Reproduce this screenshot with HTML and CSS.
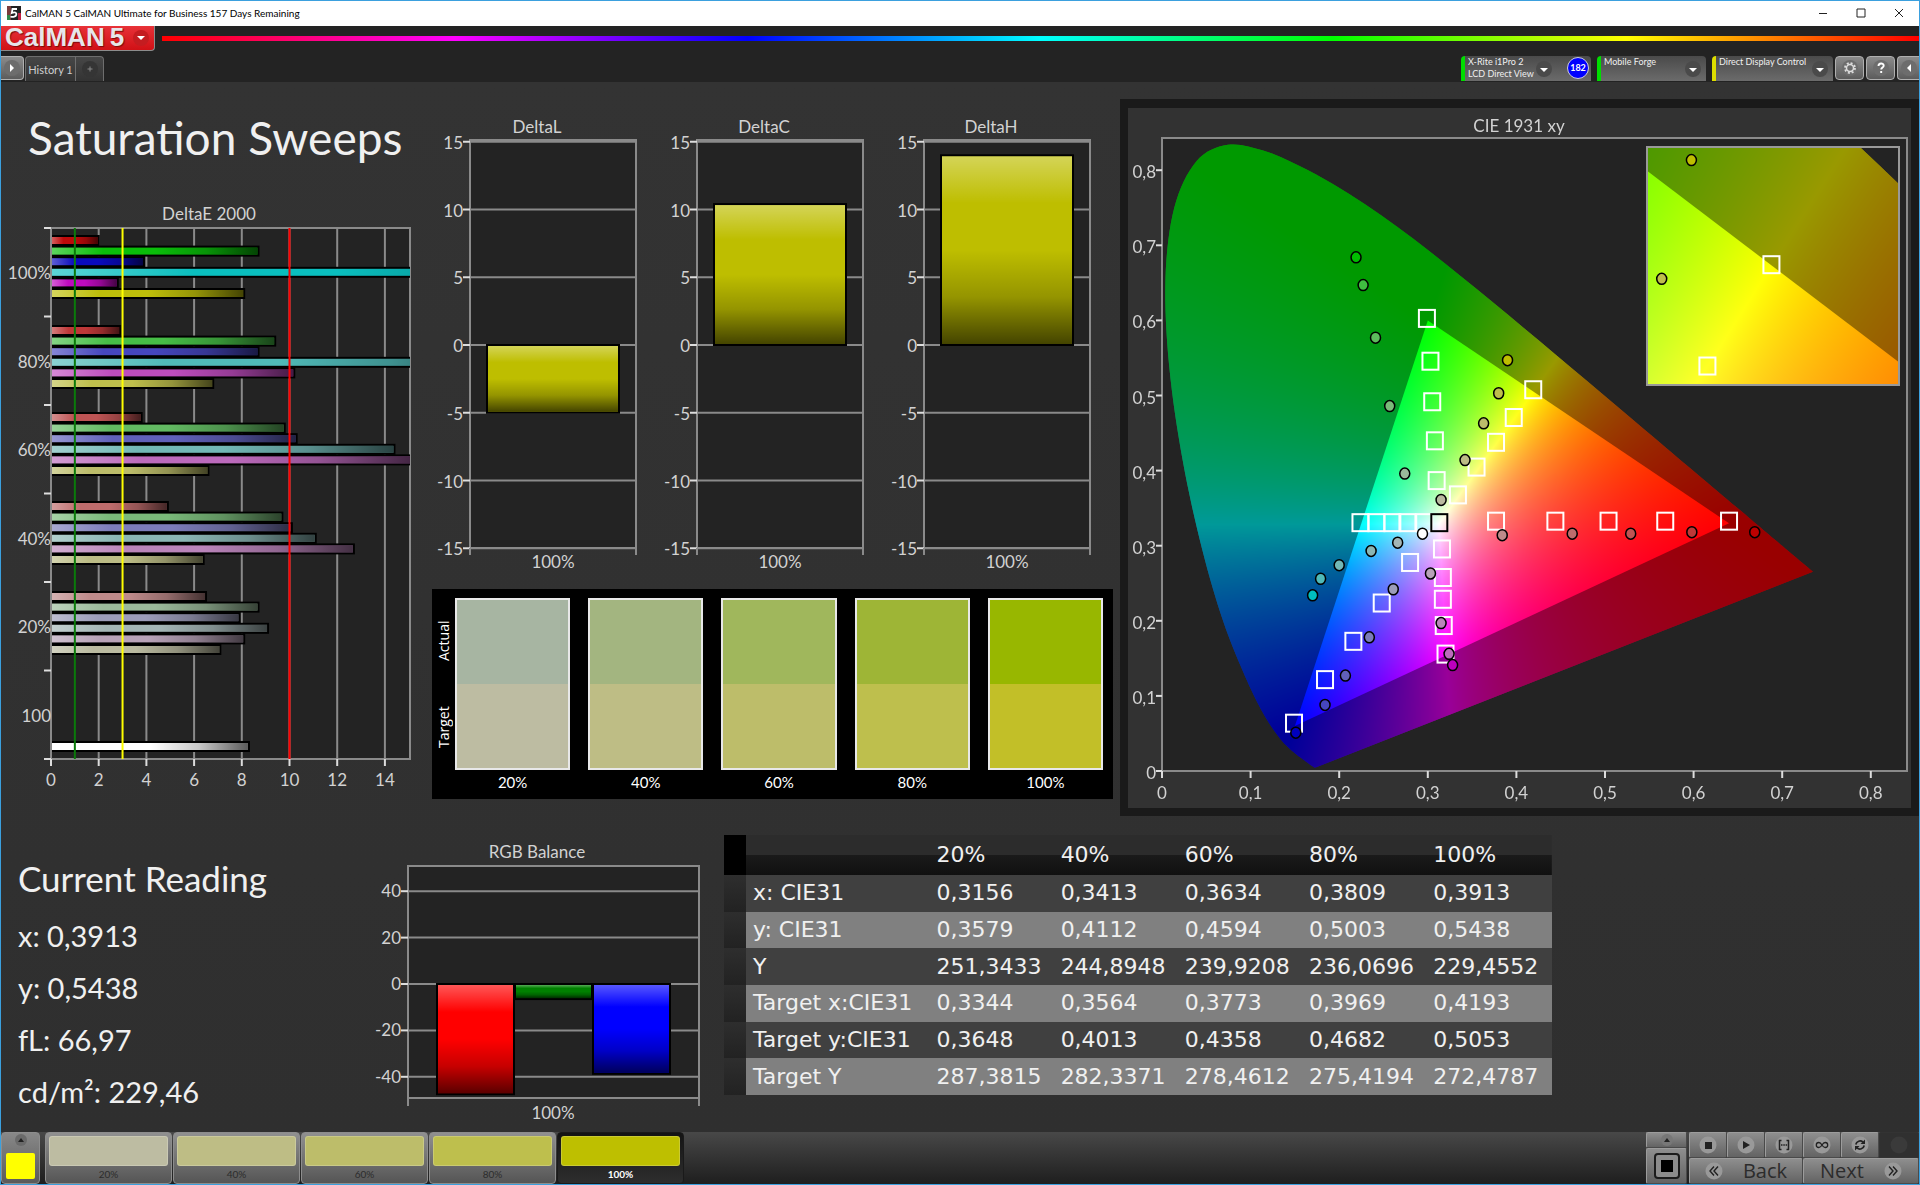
FILE: index.html
```html
<!DOCTYPE html>
<html lang="en">
<head>
    <meta charset="UTF-8">
    <meta name="viewport" content="width=device-width, initial-scale=1.0">
    <title>CalMAN 5</title>
    <link rel="stylesheet" href="styles.css">
</head>
<body>
    <svg class="defs" aria-hidden="true">
        <defs>
            <linearGradient id="glossV" x1="0" y1="0" x2="0" y2="1">
                <stop offset="0" stop-color="#fff" stop-opacity=".34"/>
                <stop offset=".25" stop-color="#fff" stop-opacity="0"/>
                <stop offset=".5" stop-color="#000" stop-opacity="0"/>
                <stop offset=".75" stop-color="#000" stop-opacity=".22"/>
                <stop offset="1" stop-color="#000" stop-opacity=".64"/>
            </linearGradient>
            <linearGradient id="glossH" x1="0" y1="0" x2="1" y2="0">
                <stop offset="0" stop-color="#fff" stop-opacity=".34"/>
                <stop offset=".25" stop-color="#fff" stop-opacity="0"/>
                <stop offset=".5" stop-color="#000" stop-opacity="0"/>
                <stop offset=".75" stop-color="#000" stop-opacity=".22"/>
                <stop offset="1" stop-color="#000" stop-opacity=".64"/>
            </linearGradient>
        </defs>
    </svg>

    <div class="window">
        <header class="titlebar">
            <svg class="app-icon" viewBox="0 0 14 14">
                <rect width="14" height="14" fill="#222"/>
                <path d="M0 0h4v14h-4z" fill="#7a3b3b"/>
                <path d="M0 9h3v5h-3z" fill="#2f8a4a"/>
                <path d="M11 7h3v7h-3z" fill="#c02040"/>
                <path d="M10 3H5.500l-.7 4c3-1.500 5-.3 4.500 1.700S6 11.500 3.500 10.500" fill="none" stroke="#fff" stroke-width="1.800"/>
            </svg>
            <span class="titlebar-text">CalMAN 5 CalMAN Ultimate for Business 157 Days Remaining</span>
            <div class="window-buttons">
                <button type="button" aria-label="Minimize"><svg viewBox="0 0 10 10"><path d="M1 5.500h8"/></svg></button>
                <button type="button" aria-label="Maximize"><svg viewBox="0 0 10 10"><path d="M1 1h8v8h-8z"/></svg></button>
                <button type="button" aria-label="Close"><svg viewBox="0 0 10 10"><path d="M1 1l8 8M9 1l-8 8"/></svg></button>
            </div>
        </header>

        <div class="brandbar">
            <button type="button" class="logo">
                <span>CalMAN</span><span>5</span>
                <svg class="knob" viewBox="0 0 18 18"><circle cx="9" cy="9" r="8" fill="#c41c20"/><path d="M5 7h8l-4 4z" fill="#fff"/></svg>
            </button>
            <div class="rainbow"></div>
        </div>

        <nav class="toolbar">
            <button type="button" class="tool tool-first" aria-label="Expand">
                <svg viewBox="0 0 18 18"><circle cx="9" cy="9" r="8" fill="#6d6d6d"/><path d="M7 5v8l4-4z" fill="#fff"/></svg>
            </button>
            <div class="tabs">
                <button type="button" class="tab">History 1</button>
                <button type="button" class="tab tab-add" aria-label="Add tab">
                    <svg viewBox="0 0 18 18"><circle cx="9" cy="9" r="8" fill="#353535"/><path d="M6.500 9h5M9 6.500v5" stroke="#8a8a8a"/></svg>
                </button>
            </div>
            <div class="devices">
                <button type="button" class="device green meter">
                    <span>X-Rite i1Pro 2<br>LCD Direct View</span>
                    <svg class="knob" viewBox="0 0 18 18"><circle cx="9" cy="9" r="8" fill="#4a4a4a"/><path d="M5 8h8l-4 4z" fill="#fff"/></svg>
                    <b class="badge">182</b>
                </button>
                <button type="button" class="device green source">
                    <span>Mobile Forge</span>
                    <svg class="knob" viewBox="0 0 18 18"><circle cx="9" cy="9" r="8" fill="#4a4a4a"/><path d="M5 8h8l-4 4z" fill="#fff"/></svg>
                </button>
                <button type="button" class="device yellow display">
                    <span>Direct Display Control</span>
                    <svg class="knob" viewBox="0 0 18 18"><circle cx="9" cy="9" r="8" fill="#4a4a4a"/><path d="M5 8h8l-4 4z" fill="#fff"/></svg>
                </button>
                <button type="button" class="tool" aria-label="Settings">
                    <svg viewBox="0 0 18 18"><circle cx="9" cy="9" r="8" fill="#6d6d6d"/><circle cx="9" cy="9" r="3.500" fill="none" stroke="#ddd" stroke-width="1.500"/><circle cx="9" cy="9" r="5" fill="none" stroke="#ddd" stroke-width="1.800" stroke-dasharray="2 1.930"/></svg>
                </button>
                <button type="button" class="tool" aria-label="Help">
                    <svg viewBox="0 0 18 18"><circle cx="9" cy="9" r="8" fill="#6d6d6d"/><path d="M6.500 7c0-3.300 5.200-3.300 5.200-.3 0 1.800-2.500 1.800-2.500 3.800M9.200 12v2" fill="none" stroke="#fff" stroke-width="1.900"/></svg>
                </button>
                <button type="button" class="tool tool-last" aria-label="Collapse">
                    <svg viewBox="0 0 18 18"><circle cx="9" cy="9" r="8" fill="#6d6d6d"/><path d="M11 5v8l-4-4z" fill="#fff"/></svg>
                </button>
            </div>
        </nav>

        <main>
            <section class="charts">
                <div class="sweeps">
                    <h1>Saturation Sweeps</h1>
                    <svg class="chart" id="deltaE" viewBox="0 0 430 600"></svg>
                </div>

                <div class="deltas">
                    <div class="delta-row">
                        <svg class="chart" id="deltaL" viewBox="0 0 227 470"></svg>
                        <svg class="chart" id="deltaC" viewBox="0 0 227 470"></svg>
                        <svg class="chart" id="deltaH" viewBox="0 0 227 470"></svg>
                    </div>
                    <div class="swatches">
                        <div class="swatch-side"><span>Actual</span><span>Target</span></div>
                        <div class="swatch s20"><div><i></i><i></i></div><span>20%</span></div>
                        <div class="swatch s40"><div><i></i><i></i></div><span>40%</span></div>
                        <div class="swatch s60"><div><i></i><i></i></div><span>60%</span></div>
                        <div class="swatch s80"><div><i></i><i></i></div><span>80%</span></div>
                        <div class="swatch s100"><div><i></i><i></i></div><span>100%</span></div>
                    </div>
                </div>

                <div class="cie">
                    <canvas id="cieFill" width="783" height="700"></canvas>
                    <svg class="chart" id="cieAxes" viewBox="0 0 783 700"></svg>
                </div>
            </section>

            <section class="details">
                <div class="reading">
                    <h2>Current Reading</h2>
                    <p>x: 0,3913</p>
                    <p>y: 0,5438</p>
                    <p>fL: 66,97</p>
                    <p>cd/m²: 229,46</p>
                </div>
                <svg class="chart" id="rgbBalance" viewBox="0 0 335 295"></svg>
                <table>
                    <thead>
                        <tr><th class="grip"></th><th class="name"></th><th>20%</th><th>40%</th><th>60%</th><th>80%</th><th>100%</th></tr>
                    </thead>
                    <tbody>
                        <tr><td class="grip"></td><th class="name">x: CIE31</th><td>0,3156</td><td>0,3413</td><td>0,3634</td><td>0,3809</td><td>0,3913</td></tr>
                        <tr><td class="grip"></td><th class="name">y: CIE31</th><td>0,3579</td><td>0,4112</td><td>0,4594</td><td>0,5003</td><td>0,5438</td></tr>
                        <tr><td class="grip"></td><th class="name">Y</th><td>251,3433</td><td>244,8948</td><td>239,9208</td><td>236,0696</td><td>229,4552</td></tr>
                        <tr><td class="grip"></td><th class="name">Target x:CIE31</th><td>0,3344</td><td>0,3564</td><td>0,3773</td><td>0,3969</td><td>0,4193</td></tr>
                        <tr><td class="grip"></td><th class="name">Target y:CIE31</th><td>0,3648</td><td>0,4013</td><td>0,4358</td><td>0,4682</td><td>0,5053</td></tr>
                        <tr><td class="grip"></td><th class="name">Target Y</th><td>287,3815</td><td>282,3371</td><td>278,4612</td><td>275,4194</td><td>272,4787</td></tr>
                    </tbody>
                </table>
            </section>
        </main>

        <footer>
            <button type="button" class="pick" aria-label="Pattern colour">
                <svg viewBox="0 0 14 14"><circle cx="7" cy="7" r="6" fill="#6a6a6a"/><path d="M4 9h6l-3-4z" fill="#222"/></svg>
                <i></i>
            </button>
            <div class="steps">
                <button type="button" class="step s20"><i></i>20%</button>
                <button type="button" class="step s40"><i></i>40%</button>
                <button type="button" class="step s60"><i></i>60%</button>
                <button type="button" class="step s80"><i></i>80%</button>
                <button type="button" class="step s100 active"><i></i>100%</button>
            </div>
            <div class="transport">
                <div class="window-pick">
                    <button type="button" aria-label="Open"><svg viewBox="0 0 14 14"><circle cx="7" cy="7" r="6" fill="#777"/><path d="M4 9h6l-3-4z" fill="#222"/></svg></button>
                    <button type="button" aria-label="Pattern window"><svg class="big" viewBox="0 0 26 26"><rect x="1" y="1" width="24" height="24" rx="3" fill="#8c8c8c" stroke="#1c1c1c" stroke-width="2"/><rect x="7" y="7" width="12" height="12" fill="#000"/></svg></button>
                </div>
                <div class="keys">
                    <button type="button" aria-label="Stop"><svg viewBox="0 0 18 18"><circle cx="9" cy="9" r="8.500"/><path d="M6 6h7v7h-7z" fill="#222"/></svg></button>
                    <button type="button" aria-label="Play"><svg viewBox="0 0 18 18"><circle cx="9" cy="9" r="8.500"/><path d="M6 5v8l7-4z" fill="#222"/></svg></button>
                    <button type="button" aria-label="Read series"><svg viewBox="0 0 18 18"><circle cx="9" cy="9" r="8.500"/><path d="M6.500 4.500h-2v9h2M11.500 4.500h2v9h-2M6 9h1.500M8.300 9h1.500M10.600 9h1.500" fill="none" stroke="#222" stroke-width="1.500"/></svg></button>
                    <button type="button" aria-label="Read continuous"><svg viewBox="0 0 18 18"><circle cx="9" cy="9" r="8.500"/><path d="M9 9C7.500 6.500 6.800 6.500 5.800 6.500a2.500 2.500 0 0 0 0 5C6.800 11.500 7.500 11.500 9 9s2.200-2.500 3.200-2.500a2.500 2.500 0 0 1 0 5C11.200 11.500 10.500 11.500 9 9z" fill="none" stroke="#222" stroke-width="1.300"/></svg></button>
                    <button type="button" aria-label="Refresh"><svg viewBox="0 0 18 18"><circle cx="9" cy="9" r="8.500"/><path d="M4.800 8.500a4.300 4.300 0 0 1 7.200-2.300M13.200 9.500a4.300 4.300 0 0 1-7.200 2.300" fill="none" stroke="#222" stroke-width="1.700"/><path d="M14 3.500v4.500h-4.500zM4 14.500v-4.500h4.500z" fill="#222"/></svg></button>
                    <button type="button" class="off" aria-label="Record" disabled><svg viewBox="0 0 18 18"><circle cx="9" cy="9" r="8.500"/></svg></button>
                    <button type="button" class="wide"><svg viewBox="0 0 18 18"><circle cx="9" cy="9" r="8.500"/><path d="M9 4.500l-4 4.500 4 4.500M13 4.500l-4 4.500 4 4.500" fill="none" stroke="#222" stroke-width="1.400"/></svg>Back</button>
                    <button type="button" class="wide">Next<svg viewBox="0 0 18 18"><circle cx="9" cy="9" r="8.500"/><path d="M5 4.500l4 4.500-4 4.500M9 4.500l4 4.500-4 4.500" fill="none" stroke="#222" stroke-width="1.400"/></svg></button>
                </div>
            </div>
        </footer>
    </div>
    <script src="charts.js"></script>
</body>
</html>
```
FILE: styles.css
```css
* {
    box-sizing: border-box;
}
body {
    margin: 0;
    background: #313131;
    color: #f0f0f0;
    font-family: Lato, "Open Sans", sans-serif;
}
button {
    margin: 0;
    padding: 0;
    border: none;
    background: none;
    color: inherit;
    font: inherit;
    cursor: pointer;
}
svg {
    display: block;
}
.defs {
    position: absolute;
    width: 0;
    height: 0;
}
.window {
    display: flex;
    flex-direction: column;
    min-height: 100vh;
    border: 1px solid #3ba0de;
}

/* title bar */
.titlebar {
    display: flex;
    align-items: center;
    height: 25px;
    padding: 0 1px 2px 6px;
    background: #fff;
    color: #000;
    font-size: 10px;
}
.app-icon {
    width: 14px;
    height: 14px;
    margin-right: 4px;
}
.window-buttons {
    display: flex;
    margin-left: auto;
}
.window-buttons button {
    display: grid;
    place-items: center;
    width: 38px;
    height: 22px;
}
.window-buttons svg {
    width: 10px;
    height: 10px;
    fill: none;
    stroke: #222;
}

/* brand and toolbar */
.brandbar {
    display: flex;
    gap: 7px;
    height: 30px;
    background: #232323;
}
.logo {
    display: flex;
    align-items: center;
    gap: 5px;
    width: 154px;
    height: 25px;
    padding: 0 0 3px 4px;
    border: 1px solid #8c8c8c;
    border-width: 0 1px 1px 0;
    border-radius: 0 0 4px 0;
    background: linear-gradient(#e83238, #d01015);
    color: #e6e6ea;
    font: bold 26px/20px "Liberation Sans", sans-serif;
    text-shadow: 1px 1px 1px #7a0a0a;
}
.knob {
    flex: none;
    width: 18px;
    height: 18px;
}
.logo .knob {
    margin: 2px 0 0 3px;
}
.rainbow {
    flex: 1;
    height: 5px;
    margin-top: 10px;
    background: linear-gradient(to right, #f00, #f0f, #00f, #0ff, #0f0, #ff0, #f00);
}
.toolbar {
    display: flex;
    height: 26px;
    background: #232323;
    font-size: 11px;
}
.tool {
    display: grid;
    place-items: center;
    width: 29px;
    height: 24px;
    border: 1px solid #b0b0b0;
    border-radius: 4px;
    background: linear-gradient(#8b8b8b, #5c5c5c);
}
.tool svg {
    width: 18px;
    height: 18px;
}
.tool-first {
    width: 23px;
    border-left: none;
    border-radius: 0 4px 4px 0;
}
.tool-last {
    width: 22px;
    border-right: none;
    border-radius: 4px 0 0 4px;
}
.tabs {
    display: flex;
    height: 25px;
    margin-left: 1px;
    border: 1px solid #6e6e6e;
    border-bottom: none;
    border-radius: 4px 4px 0 0;
    background: linear-gradient(#474747, #333);
}
.tab {
    width: 49px;
    color: #d0d0d0;
}
.tab-add {
    display: grid;
    place-items: center;
    width: 28px;
    border-left: 1px solid #6e6e6e;
}
.tab-add svg {
    width: 18px;
    height: 18px;
}
.devices {
    display: flex;
    gap: 2px;
    margin-left: auto;
}
.device {
    display: flex;
    align-items: flex-start;
    height: 25px;
    margin-right: 4px;
    padding-left: 3px;
    border-left: 4px solid #0d0;
    border-radius: 4px 4px 0 0;
    background: linear-gradient(#4a4a4a, #6b6b6b);
    font-size: 9px;
    line-height: 12px;
    text-align: left;
    white-space: nowrap;
}
.device span {
    flex: 1;
}
.device .knob {
    margin: 4px 4px 0 0;
}
.device.yellow {
    border-left-color: #dd0;
    margin-right: 0;
}
.meter {
    width: 130px;
}
.source {
    width: 109px;
}
.display {
    width: 121px;
}
.meter .knob {
    margin-right: 14px;
}
.badge {
    width: 22px;
    height: 22px;
    margin: 1px 2px 0 0;
    border: 1px solid #ccd;
    border-radius: 50%;
    background: #00f;
    color: #fff;
    font-size: 9px;
    line-height: 20px;
    text-align: center;
}

/* charts */
main {
    flex: 1;
    background: linear-gradient(#333, #2f2f2f);
}
.charts {
    display: grid;
    grid-template-columns: 430fr 687fr 801fr;
    align-items: start;
}
.chart {
    width: 100%;
    height: auto;
}
.chart text {
    fill: #d2d2d2;
    font-size: 17px;
}
h1 {
    margin: 26px 0 32px 27px;
    font-size: 46px;
    font-weight: normal;
    line-height: 60px;
}
.deltas {
    padding: 28px 5px 0 1px;
}
.delta-row {
    display: grid;
    grid-template-columns: repeat(3, 1fr);
}
.swatches {
    display: flex;
    gap: 18px;
    margin-top: 9px;
    padding: 9px 10px 5px 0;
    background: #000;
    color: #fff;
    font-size: 15px;
}
.swatch-side {
    display: flex;
    flex-direction: row-reverse;
    width: 23px;
    height: 172px;
    margin-right: -18px;
    font-family: "Open Sans", sans-serif;
    font-size: 14px;
    writing-mode: vertical-rl;
    transform: rotate(180deg);
}
.swatch-side span {
    flex: 1;
    line-height: 23px;
    text-align: center;
}
.swatch {
    flex: 1;
    text-align: center;
    line-height: 24px;
}
.swatch div {
    height: 172px;
    border: 2px solid #e8e8e8;
}
.swatch i {
    display: block;
    height: 50%;
}
.swatch.s20 i { background: #a7b5a2; }
.swatch.s40 i { background: #a3b580; }
.swatch.s60 i { background: #a0b75c; }
.swatch.s80 i { background: #9eb536; }
.swatch.s100 i { background: #98b700; }
.swatch.s20 i + i { background: #bdbca2; }
.swatch.s40 i + i { background: #bebd85; }
.swatch.s60 i + i { background: #bdbd6a; }
.swatch.s80 i + i { background: #bebf4d; }
.swatch.s100 i + i { background: #c2bf28; }
.cie {
    display: grid;
    margin: 17px 0 0 2px;
    border: solid #1a1a1a;
    border-width: 9px 8px 8px;
    background: #323232;
}
.cie canvas,
.cie svg {
    grid-area: 1 / 1;
    width: 100%;
    height: auto;
}

/* lower half */
.details {
    display: grid;
    grid-template-columns: 369fr 335fr 19fr 828fr 367fr;
    align-items: start;
    padding-top: 19px;
}
.reading {
    padding-left: 17px;
    white-space: nowrap;
}
h2 {
    margin: 19px 0 8px;
    font-size: 35px;
    font-weight: normal;
    line-height: 48px;
}
.reading p {
    margin: 0;
    font-size: 29px;
    line-height: 52px;
}
table {
    grid-column: 4;
    width: 100%;
    height: 260px;
    table-layout: fixed;
    border-collapse: collapse;
    font: 22px/26px "DejaVu Sans", sans-serif;
}
thead tr {
    height: 40px;
    background: linear-gradient(#2c2c2c 50%, #1a1a1a 50%, #101010);
}
tbody tr {
    height: 36px;
    background: #404040;
}
tbody tr:nth-child(even) {
    background: #808080;
}
th,
td {
    width: 15%;
    padding: 0;
    font-weight: normal;
    text-align: left;
    white-space: nowrap;
}
th:last-child {
    width: auto;
}
.name {
    width: 23%;
    padding-left: 7px;
}
.grip {
    width: 22px;
    background: linear-gradient(#2e2e2e, #222);
}
thead .grip {
    background: #000;
}

/* footer */
footer {
    display: flex;
    height: 52px;
    background: linear-gradient(#484848, #1e1e1e);
    color: #2c2c2c;
}
.pick {
    display: flex;
    flex-direction: column;
    align-items: center;
    justify-content: space-between;
    width: 39px;
    padding: 0 0 4px;
    border: 1px solid #8d8d8d;
    border-radius: 4px;
    background: linear-gradient(#888, #5a5a5a);
}
.pick svg {
    width: 14px;
    height: 14px;
}
.pick i {
    width: 29px;
    height: 26px;
    border-radius: 2px;
    background: #ff0;
}
.steps {
    display: flex;
    gap: 1px;
    margin-left: 5px;
}
.step {
    width: 127px;
    padding: 3px;
    border: 1px solid #8d8d8d;
    border-radius: 4px;
    background: linear-gradient(#909090, #555);
    font-size: 10px;
    line-height: 16px;
}
.step i {
    display: block;
    height: 30px;
    border: 1px solid rgba(255, 255, 255, .2);
    border-radius: 3px;
}
.step.s20 i { background: #bdbca2; }
.step.s40 i { background: #bebd85; }
.step.s60 i { background: #bdbd6a; }
.step.s80 i { background: #bebf4d; }
.step.s100 i { background: #bebf00; }
.step.active {
    border-color: #1a1a1a;
    background: linear-gradient(#141414, #2e2e2e);
    color: #fff;
    font-weight: bold;
}
.transport {
    display: flex;
    gap: 2px;
    margin-left: auto;
}
.window-pick {
    display: grid;
    grid-template-rows: 16px 36px;
    width: 41px;
}
.window-pick button,
.keys button {
    display: flex;
    align-items: center;
    justify-content: center;
    gap: 20px;
    border: 1px solid #9c9c9c;
    border-color: #9c9c9c #4a4a4a #4a4a4a #9c9c9c;
    border-radius: 2px;
    background: linear-gradient(#8e8e8e, #636363);
}
.window-pick svg {
    width: 14px;
    height: 14px;
}
.window-pick .big {
    width: 26px;
    height: 26px;
}
.keys {
    display: grid;
    grid-template-columns: repeat(5, 38px) 40px;
    grid-template-rows: 26px 26px;
    font: 20px/22px "Open Sans", sans-serif;
}
.keys svg {
    width: 18px;
    height: 18px;
}
.keys circle {
    fill: #999;
}
.keys .wide {
    grid-column: span 3;
}
.keys .off {
    border-color: #333;
    background: #303030;
}
.keys .off circle {
    fill: #3a3a3a;
}
```
FILE: charts.js
```js
function line(x1, y1, x2, y2, color, width) {
    return `<line x1="${x1}" y1="${y1}" x2="${x2}" y2="${y2}" stroke="${color}" stroke-width="${width || 2}"/>`;
}

function text(x, y, value, anchor) {
    return `<text x="${x}" y="${y}" text-anchor="${anchor || 'middle'}">${value}</text>`;
}

function box(x, y, w, h, fill, stroke) {
    return `<rect x="${x}" y="${y}" width="${w}" height="${h}" fill="${fill}" stroke="${stroke || 'none'}" stroke-width="2"/>`;
}

const GRID = '#8a8a8a';
const PLOT = '#232323';

// DeltaE 2000
function drawDeltaE() {
    const groups = [
        { label: '100%', top: 35, bars: [['#be0a0a', 2], ['#0abe0a', 8.7], ['#0a0abe', 3.9], ['#0abebe', 24], ['#be0abe', 2.8], ['#bebe0a', 8.1]] },
        { label: '80%', top: 125, bars: [['#be3838', 2.9], ['#46be46', 9.4], ['#4646be', 8.7], ['#50bab8', 19], ['#be4cbe', 10.2], ['#bebe4c', 6.8]] },
        { label: '60%', top: 212, bars: [['#be5454', 3.8], ['#62ba62', 9.8], ['#6060ba', 10.3], ['#72b8b6', 14.4], ['#bc6abc', 15.1], ['#bcbc6a', 6.6]] },
        { label: '40%', top: 301, bars: [['#be6c6c', 4.9], ['#7aba7a', 9.7], ['#7c7cba', 10.1], ['#8ab6b4', 11.1], ['#ba84ba', 12.7], ['#bcbc86', 6.4]] },
        { label: '20%', top: 391, bars: [['#be8a8a', 6.5], ['#9aba9a', 8.7], ['#9c9cba', 7.9], ['#a4b6b6', 9.1], ['#b8a2b8', 8.1], ['#babaa0', 7.1]] },
        { label: '100', top: 541, bars: [['#ffffff', 8.3]] }
    ];
    const left = 50, top = 28, right = 409, bottom = 559, unit = 23.85;
    let out = `<clipPath id="deltaEPlot"><rect x="${left}" y="${top}" width="${right - left}" height="${bottom - top}"/></clipPath>`;
    out += text(208, 20, 'DeltaE 2000') + box(left, top, right - left, bottom - top, PLOT, GRID);
    for (let v = 0; v <= 14; v += 2) {
        const x = left + v * unit;
        out += line(x, top, x, bottom, GRID) + line(x, bottom, x, bottom + 7, '#ddd');
        out += text(x, bottom + 27, v);
    }
    for (let i = 0; i <= 6; i++) {
        const y = top + i * 88.5;
        out += line(left - 7, y, left, y, '#ddd');
    }
    groups.forEach((group, i) => {
        out += text(left, top + i * 88.5 + 51, group.label, 'end');
        group.bars.forEach((bar, j) => {
            const y = group.top + j * 10.6;
            const w = bar[1] * unit;
            out += '<g clip-path="url(#deltaEPlot)">' + box(left + 1, y, w, 11, '#000');
            out += box(left + 1, y + 2, w - 2, 7, bar[0]) + box(left + 1, y + 2, w - 2, 7, 'url(#glossH)') + '</g>';
        });
    });
    out += line(left + unit, top, left + unit, bottom, '#0a7a0a');
    out += line(left + 3 * unit, top, left + 3 * unit, bottom, '#ff0');
    out += line(left + 10 * unit, top, left + 10 * unit, bottom, '#f00');
    document.getElementById('deltaE').innerHTML = out;
}

function glossyBar(x, y, w, h, color) {
    return box(x, y, w, h, color, '#000') + box(x + 1, y + 1, w - 2, h - 2, 'url(#glossV)');
}

// DeltaL, DeltaC and DeltaH share one layout
function drawDelta(id, title, value) {
    const left = 38, right = 204, top = 30, bottom = 438, zero = 235, unit = 13.55;
    let out = text(105, 23, title) + box(left, top, right - left, bottom - top, PLOT, GRID);
    for (let v = 15; v >= -15; v -= 5) {
        const y = zero - v * unit;
        out += line(left, y, right, y, GRID) + line(left - 7, y, left, y, '#ddd');
        out += text(left - 7, y + 7, v, 'end');
    }
    out += line(left, bottom, left, bottom + 7, GRID) + line(right, bottom, right, bottom + 7, GRID);
    const h = Math.abs(value) * unit;
    out += glossyBar(left + 17, value > 0 ? zero - h : zero, 132, h, '#bebe00');
    out += text(121, 458, '100%');
    document.getElementById(id).innerHTML = out;
}

function drawBalance() {
    const left = 38, right = 329, top = 31, bottom = 263, zero = 149, unit = 2.32;
    let out = text(167, 23, 'RGB Balance') + box(left, top, right - left, bottom - top, PLOT, GRID);
    for (let v = 40; v >= -40; v -= 20) {
        const y = zero - v * unit;
        out += line(left, y, right, y, GRID) + line(left - 7, y, left, y, '#ddd');
        out += text(left - 7, y + 6, v, 'end');
    }
    out += line(left, bottom, left, bottom + 8, GRID) + line(right, bottom, right, bottom + 8, GRID);
    out += glossyBar(67, zero, 77, 47.5 * unit, '#ff0000');
    out += glossyBar(145, zero, 77, 6.5 * unit, '#008000');
    out += glossyBar(223, zero, 77, 38.7 * unit, '#0000ff');
    out += text(183, 284, '100%');
    document.getElementById('rgbBalance').innerHTML = out;
}

// CIE 1931 spectral locus, 380 to 700 nm
const LOCUS = [
    [.1741, .0050], [.1733, .0048], [.1726, .0048], [.1714, .0051], [.1689, .0069], [.1644, .0109], [.1566, .0177],
    [.1510, .0227], [.1440, .0297], [.1355, .0399], [.1241, .0578], [.1096, .0868], [.0913, .1327], [.0687, .2007],
    [.0454, .2950], [.0235, .4127], [.0082, .5384], [.0039, .6548], [.0139, .7502], [.0389, .8120], [.0743, .8338],
    [.1142, .8262], [.1547, .8059], [.1929, .7816], [.2296, .7543], [.2658, .7243], [.3016, .6923], [.3373, .6589],
    [.3731, .6245], [.4087, .5896], [.4441, .5547], [.4788, .5202], [.5125, .4866], [.5448, .4544], [.5752, .4242],
    [.6029, .3965], [.6270, .3725], [.6482, .3514], [.6658, .3340], [.6915, .3083], [.7079, .2920], [.7230, .2770],
    [.7347, .2653]
];
const GAMUT = [[.64, .33], [.30, .60], [.15, .06]];

const TARGETS = [
    [.299, .602], [.303, .545], [.305, .491], [.308, .439], [.310, .386],
    [.377, .332], [.444, .332], [.504, .332], [.568, .332], [.640, .332],
    [.334, .367], [.355, .404], [.377, .437], [.397, .470], [.419, .507],
    [.224, .330], [.242, .330], [.260, .330], [.277, .330], [.296, .330],
    [.280, .277], [.248, .223], [.216, .172], [.184, .121], [.149, .063],
    [.316, .295], [.317, .257], [.317, .228], [.318, .193], [.320, .155]
];
const READINGS = [
    [.219, .684, '#00be00'], [.227, .647, '#40be40'], [.241, .577, '#5cbc5c'], [.257, .486, '#7aba7a'], [.274, .396, '#9aba9a'],
    [.390, .547, '#bebe00'], [.380, .503, '#bebe4c'], [.363, .463, '#bcbc6a'], [.342, .414, '#bcbc86'], [.315, .361, '#babaa0'],
    [.669, .318, '#be0000'], [.598, .318, '#be3838'], [.529, .316, '#be5454'], [.463, .316, '#be6c6c'], [.384, .314, '#be8a8a'],
    [.170, .234, '#00bebe'], [.179, .256, '#50bab8'], [.200, .274, '#72b8b6'], [.236, .293, '#8ab6b4'], [.266, .304, '#a4b6b6'],
    [.151, .051, '#0000be'], [.184, .088, '#4646be'], [.207, .127, '#6060ba'], [.234, .178, '#7c7cba'], [.261, .242, '#9c9cba'],
    [.324, .156, '#bc6abc'], [.328, .141, '#be00be'], [.315, .197, '#ba84ba'], [.303, .263, '#b8a2b8'], [.294, .316, '#ffffff']
];

function tracePath(ctx, points, view) {
    ctx.beginPath();
    points.forEach(p => ctx.lineTo(view.x(p[0]), view.y(p[1])));
    ctx.closePath();
}

// Catmull-Rom spline through every locus point
function traceLocus(ctx, view) {
    const pts = LOCUS.map(p => [view.x(p[0]), view.y(p[1])]);
    ctx.beginPath();
    ctx.moveTo(pts[0][0], pts[0][1]);
    for (let i = 0; i < pts.length - 1; i++) {
        const a = pts[Math.max(i - 1, 0)], b = pts[i], c = pts[i + 1], d = pts[Math.min(i + 2, pts.length - 1)];
        ctx.bezierCurveTo(
            b[0] + (c[0] - a[0]) / 6, b[1] + (c[1] - a[1]) / 6,
            c[0] - (d[0] - b[0]) / 6, c[1] - (d[1] - b[1]) / 6,
            c[0], c[1]
        );
    }
    ctx.closePath();
}

function colorField(view) {
    const field = document.createElement('canvas');
    field.width = view.w;
    field.height = view.h;
    const ctx = field.getContext('2d');
    const image = ctx.createImageData(view.w, view.h);
    for (let j = 0; j < view.h; j++) {
        for (let i = 0; i < view.w; i++) {
            const x = view.x0 + (i + .5) / view.sx;
            const y = view.y0 + (view.h - j - .5) / view.sy;
            const z = 1 - x - y;
            const rgb = [
                3.2406 * x - 1.5372 * y - .4986 * z,
                -.9689 * x + 1.8758 * y + .0415 * z,
                .0557 * x - .2040 * y + 1.0570 * z
            ].map(c => Math.max(c, 0));
            const max = Math.max(rgb[0], rgb[1], rgb[2]);
            const k = (j * view.w + i) * 4;
            for (let c = 0; c < 3; c++) {
                image.data[k + c] = 255 * rgb[c] / max;
            }
            image.data[k + 3] = 255;
        }
    }
    ctx.putImageData(image, 0, 0);
    return field;
}

function makeView(left, top, w, h, x0, y0, sx, sy) {
    return {
        left, top, w, h, x0, y0, sx, sy,
        x: v => left + (v - x0) * sx,
        y: v => top + h - (v - y0) * sy
    };
}

const MAIN_VIEW = makeView(34, 30, 745, 633, 0, 0, 886, 751);
const ZOOM_VIEW = makeView(520, 40, 250, 236, .3761, .4618, 2857, 2731);

function fillView(ctx, view) {
    const field = colorField(view);
    ctx.save();
    ctx.fillStyle = PLOT;
    ctx.fillRect(view.left, view.top, view.w, view.h);
    ctx.beginPath();
    ctx.rect(view.left, view.top, view.w, view.h);
    ctx.clip();
    ctx.save();
    traceLocus(ctx, view);
    ctx.clip();
    ctx.drawImage(field, view.left, view.top);
    ctx.fillStyle = 'rgba(0, 0, 0, .4)';
    ctx.fillRect(view.left, view.top, view.w, view.h);
    ctx.restore();
    tracePath(ctx, GAMUT, view);
    ctx.clip();
    ctx.drawImage(field, view.left, view.top);
    ctx.restore();
}

function target(x, y, color) {
    return `<rect x="${x - 8}" y="${y - 9}" width="16" height="17" fill="none" stroke="${color}" stroke-width="2"/>`;
}

function reading(x, y, color) {
    return `<ellipse cx="${x}" cy="${y}" rx="5" ry="5.500" fill="${color}" stroke="#000" stroke-width="1.500"/>`;
}

function drawCie() {
    const ctx = document.getElementById('cieFill').getContext('2d');
    fillView(ctx, MAIN_VIEW);
    fillView(ctx, ZOOM_VIEW);

    const v = MAIN_VIEW, z = ZOOM_VIEW, bottom = v.top + v.h;
    let out = text(391, 24, 'CIE 1931 xy') + box(v.left, v.top, v.w, v.h, 'none', GRID);
    for (let i = 0; i <= 8; i++) {
        const label = i ? '0,' + i : '0';
        const x = v.x(i / 10), y = v.y(i / 10);
        out += line(x, bottom, x, bottom + 7, '#ddd') + text(x, bottom + 28, label);
        out += line(v.left - 6, y, v.left, y, '#ddd') + text(v.left - 6, y + 8, label, 'end');
    }
    TARGETS.forEach(p => out += target(v.x(p[0]), v.y(p[1]), '#fff'));
    out += target(v.x(.313), v.y(.330), '#000');
    READINGS.forEach(p => out += reading(v.x(p[0]), v.y(p[1]), p[2]));

    out += box(z.left - 1, z.top - 1, z.w + 2, z.h + 2, 'none', '#999');
    out += target(z.x(.4193), z.y(.5053), '#fff') + target(z.x(.3969), z.y(.4682), '#fff');
    out += reading(z.x(.3913), z.y(.5438), '#bebe00') + reading(z.x(.3809), z.y(.5003), '#bebe4c');
    document.getElementById('cieAxes').innerHTML = out;
}

drawDeltaE();
drawDelta('deltaL', 'DeltaL', -5);
drawDelta('deltaC', 'DeltaC', 10.4);
drawDelta('deltaH', 'DeltaH', 14);
drawBalance();
drawCie();
```
